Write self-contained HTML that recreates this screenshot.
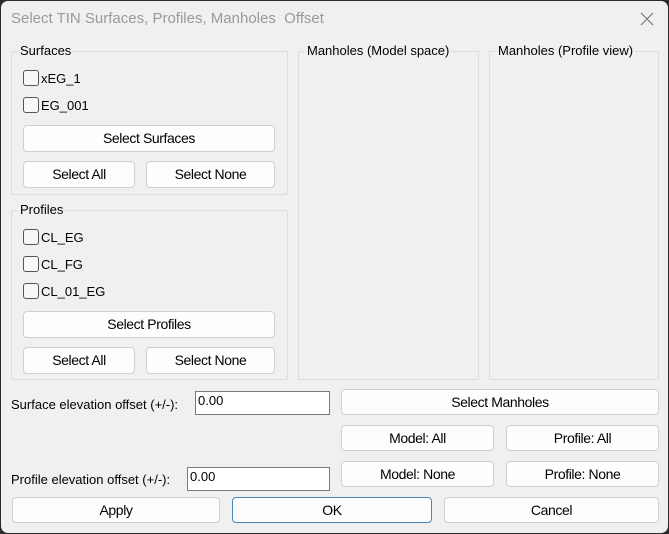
<!DOCTYPE html>
<html><head><style>
body{margin:0;width:669px;height:534px;overflow:hidden;background:#2b2b2b;font-family:"Liberation Sans",sans-serif;font-size:13px;color:#000}
#w{position:absolute;left:1px;top:1px;width:667px;height:532px;background:#f0f0f0;border-radius:7px;}
.a{position:absolute}
.g{position:absolute;border:1px solid #dcdcdc;border-radius:2px}
.gl{position:absolute;background:#f0f0f0;padding:0 2px;font-size:13px}
.b{position:absolute;background:#fdfdfd;border:1px solid #d0d0d0;border-radius:4px;box-sizing:border-box;text-align:center;font-size:14px;letter-spacing:-0.4px}
.cb{position:absolute;width:14px;height:14px;border:1px solid #555;border-radius:3px;background:#f8f8f8}
.in{position:absolute;background:#fff;border:1px solid #7a7a7a;box-sizing:border-box;padding:1px 2px;font-size:13px}
</style></head><body><div id="w">
<div class="a" style="left:10px;top:9px;font-size:15px;color:#9a9a9a">Select TIN Surfaces, Profiles, Manholes&nbsp; Offset</div>
<svg class="a" style="left:639px;top:11px" width="14" height="14"><path d="M1 1L13 13M13 1L1 13" stroke="#777" stroke-width="1.2"/></svg>

<div class="g" style="left:10px;top:50px;width:275px;height:142px"></div>
<div class="gl" style="left:17px;top:42px">Surfaces</div>
<div class="cb" style="left:22px;top:69px"></div><div class="a" style="left:40px;top:70px">xEG_1</div>
<div class="cb" style="left:22px;top:96px"></div><div class="a" style="left:40px;top:97px">EG_001</div>
<div class="b" style="left:22px;top:124px;width:252px;height:27px;line-height:25px">Select Surfaces</div>
<div class="b" style="left:22px;top:160px;width:112px;height:27px;line-height:25px">Select All</div>
<div class="b" style="left:145px;top:160px;width:129px;height:27px;line-height:25px">Select None</div>

<div class="g" style="left:10px;top:209px;width:275px;height:168px"></div>
<div class="gl" style="left:17px;top:201px">Profiles</div>
<div class="cb" style="left:22px;top:228px"></div><div class="a" style="left:40px;top:229px">CL_EG</div>
<div class="cb" style="left:22px;top:255px"></div><div class="a" style="left:40px;top:256px">CL_FG</div>
<div class="cb" style="left:22px;top:282px"></div><div class="a" style="left:40px;top:283px">CL_01_EG</div>
<div class="b" style="left:22px;top:310px;width:252px;height:27px;line-height:25px">Select Profiles</div>
<div class="b" style="left:22px;top:346px;width:112px;height:27px;line-height:25px">Select All</div>
<div class="b" style="left:145px;top:346px;width:129px;height:27px;line-height:25px">Select None</div>

<div class="g" style="left:297px;top:50px;width:179px;height:327px"></div>
<div class="gl" style="left:304px;top:42px">Manholes (Model space)</div>
<div class="g" style="left:488px;top:50px;width:168px;height:327px"></div>
<div class="gl" style="left:495px;top:42px">Manholes (Profile view)</div>

<div class="a" style="left:10px;top:396px">Surface elevation offset (+/-):</div>
<div class="in" style="left:194px;top:390px;width:135px;height:24px">0.00</div>
<div class="b" style="left:340px;top:388px;width:318px;height:26px;line-height:24px">Select Manholes</div>
<div class="b" style="left:340px;top:424px;width:153px;height:26px;line-height:24px">Model: All</div>
<div class="b" style="left:505px;top:424px;width:153px;height:26px;line-height:24px">Profile: All</div>
<div class="a" style="left:10px;top:471px">Profile elevation offset (+/-):</div>
<div class="in" style="left:186px;top:466px;width:143px;height:24px">0.00</div>
<div class="b" style="left:340px;top:460px;width:153px;height:26px;line-height:24px">Model: None</div>
<div class="b" style="left:505px;top:460px;width:153px;height:26px;line-height:24px">Profile: None</div>
<div class="b" style="left:11px;top:496px;width:208px;height:26px;line-height:24px">Apply</div>
<div class="b" style="left:231px;top:496px;width:200px;height:26px;line-height:24px;border-color:#4a86b8">OK</div>
<div class="b" style="left:443px;top:496px;width:215px;height:26px;line-height:24px">Cancel</div>
</div></body></html>
